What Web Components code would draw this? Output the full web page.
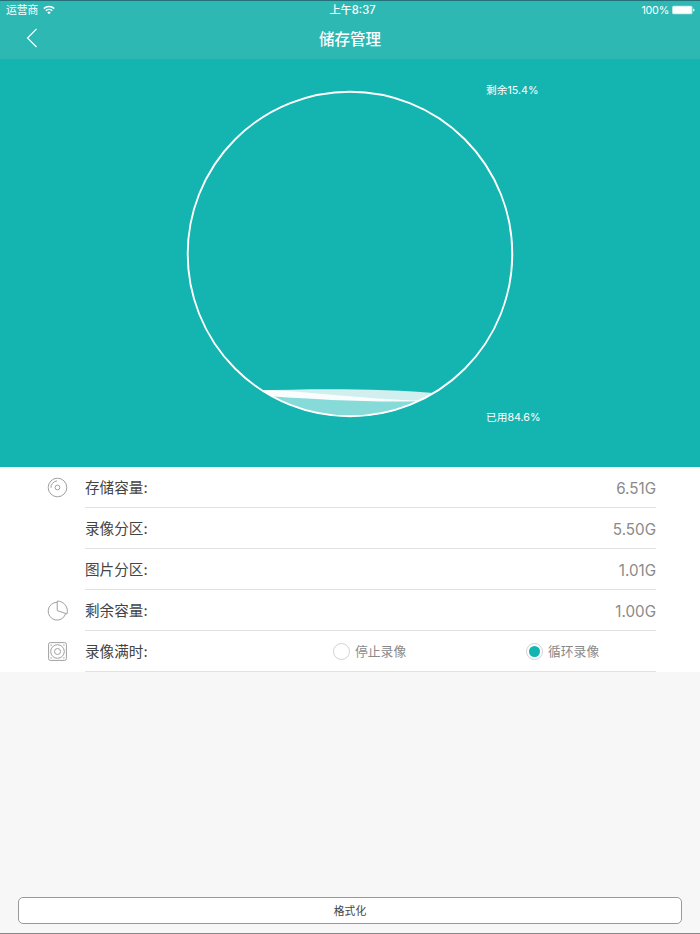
<!DOCTYPE html>
<html lang="zh-CN">
<head>
<meta charset="utf-8">
<title>储存管理</title>
<style>
    body {
        margin: 0;
        font-family: Inter, "Noto Sans CJK SC", sans-serif;
    }
</style>
</head>
<body>
<storage-page></storage-page>

<script>
function define(name, html) {
    const template = document.createElement('template');
    template.innerHTML = html;
    window.customElements.define(name, class extends HTMLElement {
        constructor() {
            super();
            this.attachShadow({mode:'open'});
            this.shadowRoot.appendChild(template.content.cloneNode(true));
        }
    });
}

define('status-bar', `
    <style>
        :host {
            display: grid;
            grid-template-columns: 1fr auto 1fr;
            align-items: center;
            height: 18px;
            padding: 0 5px 0 6px;
            font-size: 10.8px;
            line-height: 16px;
        }
        div {
            display: flex;
            align-items: center;
        }
        .text {
            padding-top: 2px;
        }
        .time {
            font-weight: 500;
            font-size: 11.2px;
            padding-left: 4px;
        }
        .right {
            justify-content: flex-end;
            letter-spacing: -.25px;
        }
        svg {
            display: block;
        }
    </style>
    <div><span class="text"><slot name="carrier"></slot></span>
        <svg width="12" height="10" viewBox="0 0 12 10" style="margin-left:5px" fill="none" stroke="#fff" stroke-width="1.5">
            <path d="M.8 3.6C3.7.7 8.3.7 11.2 3.6M2.8 5.7C4.6 4 7.4 4 9.2 5.7"/>
            <path d="M6 9.2L4.2 7.3Q6 5.9 7.8 7.3Z" fill="#fff" stroke="none"/>
        </svg>
    </div>
    <div class="time"><slot name="time"></slot></div>
    <div class="right"><span class="text"><slot name="battery"></slot></span>
        <svg width="23" height="10" viewBox="0 0 23 10" style="margin-left:3px" fill="#fff">
            <rect x="0" y=".7" width="20.5" height="8.6" rx="1.6" opacity=".65"/>
            <rect x="1" y="1.5" width="18.5" height="7" rx=".8"/>
            <path d="M21.2 3.4Q22.6 4 22.6 5T21.2 6.6Z"/>
        </svg>
    </div>
`);

define('nav-bar', `
    <style>
        :host {
            display: grid;
            grid-template-columns: 1fr auto 1fr;
            align-items: center;
            height: 38px;
            padding: 0 26px;
            font-size: 15.5px;
            font-weight: 500;
        }
        svg {
            display: block;
        }
    </style>
    <svg width="12" height="20" viewBox="0 0 12 20" fill="none" stroke="#fff" stroke-width="1.1">
        <path d="M10.5 1L1.5 10L10.5 19"/>
    </svg>
    <span><slot></slot></span>
`);

define('storage-gauge', `
    <style>
        :host {
            display: grid;
            grid-template-columns: 186px 328px 1fr;
            height: 408px;
            background: #14b4b1;
            color: #fff;
            font-size: 10.7px;
        }
        svg {
            grid-column: 2;
            margin-top: 31px;
        }
        .labels {
            display: flex;
            flex-direction: column;
            justify-content: space-between;
            height: 345px;
            margin: 23px 0 0 -28px;
            line-height: 18px;
            z-index: 1;
        }
    </style>
    <svg width="328" height="328" viewBox="186 90 328 328">
        <clipPath id="round"><circle cx="350" cy="254" r="162.5"/></clipPath>
        <g clip-path="url(#round)">
            <path fill="#d0efee" d="M186 394.5C260 389 360 386.5 440 393.5L514 400V418H186Z"/>
            <path fill="#f9fdfd" d="M186 386L263 390.3C305 390.5 345 398 422 400.8L514 401V418H186Z"/>
            <path fill="#86dad8" d="M186 390L274 396.5C315 399.2 365 402.4 418 401.3L514 399V418H186Z"/>
        </g>
        <circle cx="350" cy="254" r="162.3" fill="none" stroke="#fff" stroke-width="1.9"/>
    </svg>
    <div class="labels"><slot name="free"></slot><slot name="used"></slot></div>
`);

define('storage-row', `
    <style>
        :host {
            display: grid;
            grid-template-columns: 38px 1fr;
            height: 41px;
            padding: 0 44px 0 47px;
            background: #fff;
        }
        .icon {
            display: flex;
            align-items: center;
        }
        .line {
            display: flex;
            align-items: center;
            justify-content: space-between;
            border-bottom: 1px solid #e2e2e2;
            color: #8a8a8a;
            font-size: 15.2px;
        }
        .label {
            padding-bottom: 2px;
            color: #444;
            font-size: 14.6px;
        }
        .value {
            padding-top: 2px;
        }
    </style>
    <div class="icon"><slot name="icon"></slot></div>
    <div class="line">
        <span class="label"><slot name="label"></slot></span>
        <div class="value"><slot></slot></div>
    </div>
`);

define('radio-option', `
    <style>
        :host {
            display: flex;
            align-items: center;
            gap: 5px;
            font-size: 12.8px;
        }
        i {
            box-sizing: border-box;
            width: 17px;
            height: 17px;
            border: 1px solid #d2d2d2;
            border-radius: 50%;
            display: grid;
            place-items: center;
        }
        span {
            padding-bottom: 1px;
        }
        :host([checked]) i::after {
            content: "";
            width: 11px;
            height: 11px;
            border-radius: 50%;
            background: #14b4b1;
        }
    </style>
    <i></i><span><slot></slot></span>
`);

define('format-button', `
    <style>
        :host {
            display: block;
            margin: auto 18px 9px;
        }
        button {
            display: block;
            box-sizing: border-box;
            width: 100%;
            height: 27px;
            padding: 0 0 2px;
            border: 1px solid #999;
            border-radius: 5px;
            background: #fff;
            color: #444;
            font: 10.8px Inter, "Noto Sans CJK SC", sans-serif;
        }
    </style>
    <button><slot></slot></button>
`);

define('storage-page', `
    <style>
        :host {
            display: flex;
            flex-direction: column;
            box-sizing: border-box;
            height: 934px;
            background: #f7f7f7;
            border-top: 1px solid #237078;
            border-bottom: 1px solid #888;
        }
        header {
            height: 58px;
            background: #2eb8b4;
            color: #fff;
        }
        .options {
            display: grid;
            grid-template-columns: 193px 130px;
            margin-top: -2px;
        }
        svg {
            display: block;
            fill: none;
            stroke: #a0a0a0;
        }
    </style>
    <header>
        <status-bar>
            <span slot="carrier">运营商</span>
            <span slot="time">上午8:37</span>
            <span slot="battery">100%</span>
        </status-bar>
        <nav-bar>储存管理</nav-bar>
    </header>
    <storage-gauge>
        <span slot="free">剩余15.4%</span>
        <span slot="used">已用84.6%</span>
    </storage-gauge>
    <storage-row>
        <svg slot="icon" width="21" height="21" viewBox="0 0 21 21">
            <circle cx="10.5" cy="10.5" r="9.3"/>
            <circle cx="10.5" cy="10.5" r="2.4"/>
            <path d="M3.9 10.8A6.8 6.8 0 0 1 10.1 3.9"/>
        </svg>
        <span slot="label">存储容量:</span>6.51G
    </storage-row>
    <storage-row><span slot="label">录像分区:</span>5.50G</storage-row>
    <storage-row><span slot="label">图片分区:</span>1.01G</storage-row>
    <storage-row>
        <svg slot="icon" width="22" height="21" viewBox="0 0 22 21" stroke-linejoin="round">
            <path d="M10.2 2.3A8.9 8.9 0 1 0 18.6 13.8"/>
            <path d="M10.2 1.1A10 10 0 0 1 20 13.9L10.2 10.6Z"/>
        </svg>
        <span slot="label">剩余容量:</span>1.00G
    </storage-row>
    <storage-row>
        <svg slot="icon" width="21" height="21" viewBox="0 0 21 21">
            <rect x="1.6" y="1.6" width="17.8" height="17.8" rx="1.7"/>
            <circle cx="10.5" cy="10.5" r="6.8"/>
            <circle cx="10.5" cy="10.5" r="3"/>
            <path d="M3.5 4.1h1.2M16.3 4.1h1.2M3.5 16.9h1.2M16.3 16.9h1.2" stroke-width="1.2"/>
        </svg>
        <span slot="label">录像满时:</span>
        <div class="options">
            <radio-option>停止录像</radio-option>
            <radio-option checked>循环录像</radio-option>
        </div>
    </storage-row>
    <format-button>格式化</format-button>
`);
</script>
</body>
</html>
